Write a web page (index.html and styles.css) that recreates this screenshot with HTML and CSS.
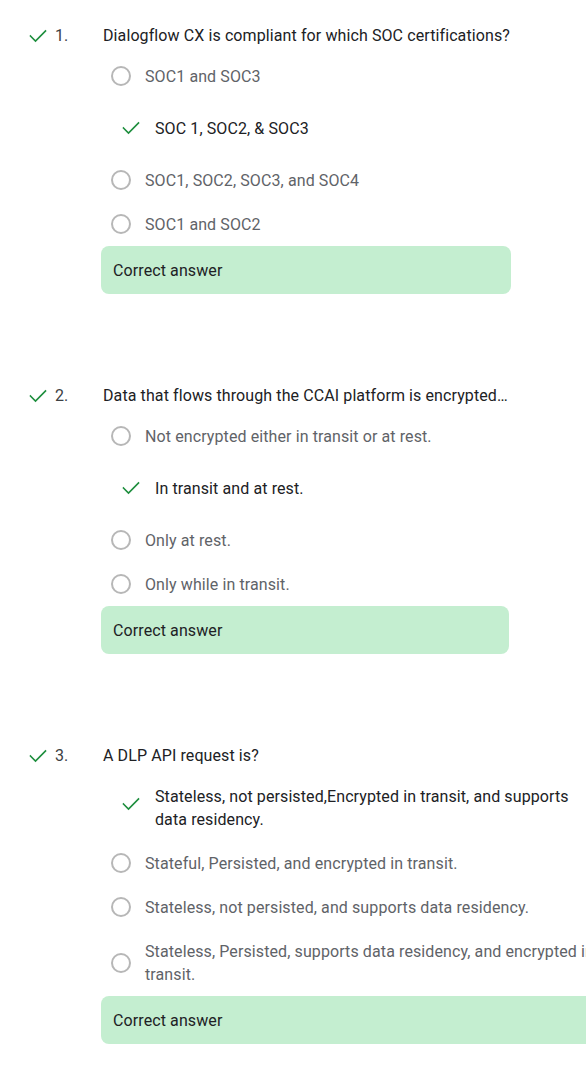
FILE: index.html
```html
<!DOCTYPE html>
<html lang="en">
<head>
<meta charset="utf-8">
<title>Quiz results</title>
<link rel="stylesheet" href="styles.css">
</head>
<body>
<main class="quiz">

  <section class="question">
    <div class="q-head">
      <svg class="check" viewBox="0 0 18 14" aria-hidden="true"><polyline points="1.5,7 6.5,12 16.5,2"/></svg>
      <span class="q-num">1.</span>
      <span class="q-text">Dialogflow CX is compliant for which SOC certifications?</span>
    </div>
    <div class="answers answers-q1">
      <div class="opt"><span class="radio"></span><span class="opt-text">SOC1 and SOC3</span></div>
      <div class="opt opt-correct"><svg class="check opt-check" viewBox="0 0 18 14" aria-hidden="true"><polyline points="1.5,7 6.5,12 16.5,2"/></svg><span class="opt-text">SOC 1, SOC2, &amp; SOC3</span></div>
      <div class="opt"><span class="radio"></span><span class="opt-text">SOC1, SOC2, SOC3, and SOC4</span></div>
      <div class="opt"><span class="radio"></span><span class="opt-text">SOC1 and SOC2</span></div>
      <div class="feedback">Correct answer</div>
    </div>
  </section>

  <section class="question">
    <div class="q-head">
      <svg class="check" viewBox="0 0 18 14" aria-hidden="true"><polyline points="1.5,7 6.5,12 16.5,2"/></svg>
      <span class="q-num">2.</span>
      <span class="q-text">Data that flows through the CCAI platform is encrypted…</span>
    </div>
    <div class="answers answers-q2">
      <div class="opt"><span class="radio"></span><span class="opt-text">Not encrypted either in transit or at rest.</span></div>
      <div class="opt opt-correct"><svg class="check opt-check" viewBox="0 0 18 14" aria-hidden="true"><polyline points="1.5,7 6.5,12 16.5,2"/></svg><span class="opt-text">In transit and at rest.</span></div>
      <div class="opt"><span class="radio"></span><span class="opt-text">Only at rest.</span></div>
      <div class="opt"><span class="radio"></span><span class="opt-text">Only while in transit.</span></div>
      <div class="feedback">Correct answer</div>
    </div>
  </section>

  <section class="question">
    <div class="q-head">
      <svg class="check" viewBox="0 0 18 14" aria-hidden="true"><polyline points="1.5,7 6.5,12 16.5,2"/></svg>
      <span class="q-num">3.</span>
      <span class="q-text">A DLP API request is?</span>
    </div>
    <div class="answers answers-q3">
      <div class="opt opt-correct"><svg class="check opt-check" viewBox="0 0 18 14" aria-hidden="true"><polyline points="1.5,7 6.5,12 16.5,2"/></svg><span class="opt-text">Stateless, not persisted,Encrypted in transit, and supports data residency.</span></div>
      <div class="opt"><span class="radio"></span><span class="opt-text">Stateful, Persisted, and encrypted in transit.</span></div>
      <div class="opt"><span class="radio"></span><span class="opt-text">Stateless, not persisted, and supports data residency.</span></div>
      <div class="opt"><span class="radio"></span><span class="opt-text">Stateless, Persisted, supports data residency, and encrypted in transit.</span></div>
      <div class="feedback">Correct answer</div>
    </div>
  </section>

</main>
</body>
</html>
```

FILE: styles.css
```css
html, body {
  margin: 0;
  padding: 0;
  background: #ffffff;
  overflow-x: hidden;
}

body {
  font-family: Roboto, "Liberation Sans", Arial, sans-serif;
  font-size: 16px;
  letter-spacing: 0.1px;
  color: #202124;
}

.quiz {
  padding-top: 24px;
  display: flex;
  flex-direction: column;
  gap: 90px;
}

.q-head {
  display: flex;
  align-items: center;
  height: 23px;
  line-height: 23px;
}

.check {
  width: 18px;
  height: 14px;
  flex: none;
  fill: none;
  stroke: #1e8e3e;
  stroke-width: 1.6;
  stroke-linecap: square;
  stroke-linejoin: miter;
}

.q-head .check {
  margin-left: 29px;
}

.q-num {
  width: 48px;
  margin-left: 8px;
  color: #3c4043;
  flex: none;
}

.q-text {
  white-space: nowrap;
}

.answers {
  margin-top: 7px;
  margin-left: 101px;
  display: flex;
  flex-direction: column;
}

.answers-q1 { width: 410px; }
.answers-q2 { width: 408px; }
.answers-q3 { width: 500px; }

.opt {
  display: flex;
  align-items: center;
  box-sizing: border-box;
  min-height: 44px;
  padding: 10.5px 0 10.5px 10px;
  line-height: 23px;
  color: #5f6368;
}

.radio {
  width: 20px;
  height: 20px;
  box-sizing: border-box;
  border: 2px solid #b7b7b7;
  border-radius: 50%;
  flex: none;
  margin-right: 14px;
}

.opt-correct {
  min-height: 60px;
  color: #202124;
}

.opt-check {
  align-self: flex-start;
  margin-top: 12px;
  margin-left: 11px;
  margin-right: 15px;
}

.opt-text {
  flex: 1;
}

.feedback {
  height: 48px;
  box-sizing: border-box;
  padding-left: 12px;
  display: flex;
  align-items: center;
  background: #c4eed0;
  border-radius: 8px;
  color: #202124;
}
```
